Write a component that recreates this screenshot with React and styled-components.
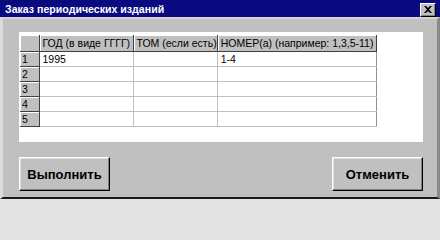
import React from 'react';
import styled, { createGlobalStyle } from 'styled-components';

const GlobalStyle = createGlobalStyle`
  html, body {
    margin: 0;
    padding: 0;
    background: #e4e4e4;
  }
  body {
    font-family: "Liberation Sans", Arial, sans-serif;
  }
`;

const Window = styled.div`
  width: 440px;
  height: 203px;
  display: flex;
  flex-flow: column nowrap;
  background: #e4e4e4;
  overflow: hidden;
`;

const TitleBar = styled.div`
  height: 17px;
  min-height: 17px;
  background: #0a0a80;
  display: flex;
  align-items: center;
  justify-content: space-between;
  padding: 0 4px 0 5px;
  box-sizing: border-box;
`;

const Title = styled.span`
  color: #fff;
  font-weight: 700;
  font-size: 10.6px;
`;

const CloseButton = styled.div`
  width: 16px;
  height: 14px;
  box-sizing: border-box;
  background: #c0c0c0;
  border-top: 1px solid #fff;
  border-left: 1px solid #fff;
  border-right: 1px solid #000;
  border-bottom: 1px solid #000;
  box-shadow: inset -1px -1px 0 #808080;
  display: flex;
  align-items: center;
  justify-content: center;
  margin-top: 2px;
`;

const Frame = styled.div`
  height: 182px;
  min-height: 182px;
  display: flex;
  flex-flow: column nowrap;
  background: #c0c0c0;
  border-top: 2px solid #d4d4d4;
  border-left: 3px solid #dcdcdc;
  border-right: 3px solid #8a8a8a;
  border-bottom: 2px solid #1a1a1a;
  box-sizing: border-box;
  padding: 13px 14px 0 16px;
`;

const GridPanel = styled.div`
  width: 404px;
  height: 110px;
  background: #fff;
  padding: 3px 0 0 1px;
  box-sizing: border-box;
`;

const Table = styled.table`
  border-collapse: collapse;
  table-layout: fixed;
  font-size: 10.5px;
  color: #000;
`;

const HeadCell = styled.th`
  height: 16px;
  padding: 0 0 0 3px;
  box-sizing: border-box;
  text-align: left;
  font-weight: 400;
  white-space: nowrap;
  overflow: hidden;
  background: #c0c0c0;
  border-right: 1px solid #404040;
  border-bottom: 1px solid #404040;
  box-shadow: inset 1px 1px 0 #fff;
`;

const RowHead = styled(HeadCell)`
  height: 15px;
  padding-left: 2px;
`;

const Cell = styled.td`
  height: 15px;
  padding: 0 0 0 3px;
  box-sizing: border-box;
  white-space: nowrap;
  background: #fff;
  border-right: 1px solid #c0c0c0;
  border-bottom: 1px solid #c0c0c0;
  border-right-color: ${props => (props.last ? '#909090' : '#c0c0c0')};
`;

const ButtonRow = styled.div`
  display: flex;
  justify-content: space-between;
  margin-top: 15px;
  width: 404px;
`;

const Button = styled.div`
  width: 91px;
  height: 34px;
  box-sizing: border-box;
  background: #c0c0c0;
  border-top: 1px solid #fff;
  border-left: 1px solid #fff;
  border-right: 1px solid #000;
  border-bottom: 1px solid #000;
  box-shadow: inset -1px -1px 0 #808080, inset 1px 1px 0 #e0e0e0;
  display: flex;
  align-items: center;
  justify-content: center;
  font-weight: 700;
  font-size: 13px;
  color: #000;
`;

const columns = [
  { title: '', width: 19 },
  { title: 'ГОД (в виде ГГГГ)', width: 94 },
  { title: 'ТОМ (если есть)', width: 81 },
  { title: 'НОМЕР(а) (например: 1,3,5-11)', width: 159 },
];

const rows = [
  ['1995', '', '1-4'],
  ['', '', ''],
  ['', '', ''],
  ['', '', ''],
  ['', '', ''],
];

export default function App() {
  return (
    <>
      <GlobalStyle />
      <Window>
        <TitleBar>
          <Title>Заказ периодических изданий</Title>
          <CloseButton>
            <svg width="8" height="7" viewBox="0 0 8 7">
              <path d="M0 0h2l2 2 2-2h2L5 3.5 8 7H6L4 5 2 7H0l3-3.5z" fill="#000" />
            </svg>
          </CloseButton>
        </TitleBar>
        <Frame>
          <GridPanel>
            <Table>
              <colgroup>
                {columns.map((c, i) => <col key={i} style={{ width: c.width }} />)}
              </colgroup>
              <thead>
                <tr>
                  {columns.map((c, i) => <HeadCell key={i}>{c.title}</HeadCell>)}
                </tr>
              </thead>
              <tbody>
                {rows.map((r, i) => (
                  <tr key={i}>
                    <RowHead>{i + 1}</RowHead>
                    {r.map((v, j) => (
                      <Cell key={j} last={j === r.length - 1}>{v}</Cell>
                    ))}
                  </tr>
                ))}
              </tbody>
            </Table>
          </GridPanel>
          <ButtonRow>
            <Button>Выполнить</Button>
            <Button>Отменить</Button>
          </ButtonRow>
        </Frame>
      </Window>
    </>
  );
}
